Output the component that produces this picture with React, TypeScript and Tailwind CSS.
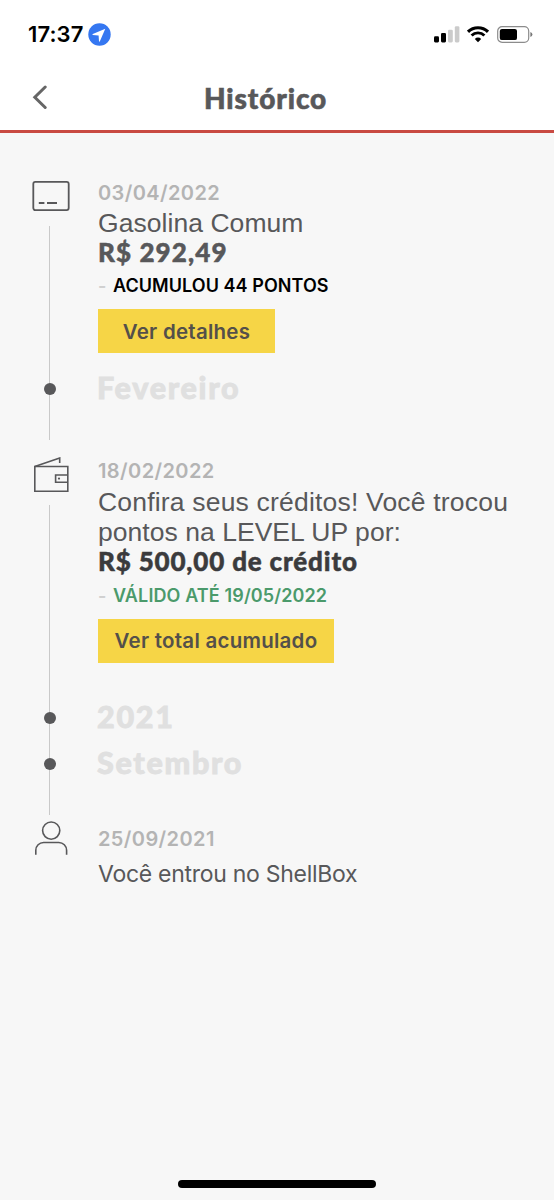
import React from 'react';

interface MonthLabelProps {
  children: React.ReactNode;
  className?: string;
}

const CardIcon = () => (
  <svg width="38" height="30" viewBox="0 0 38 30" fill="none" stroke="#58585a" strokeWidth="1.8">
    <rect x="1.3" y="0.9" width="35.4" height="28.2" rx="2" />
    <path d="M6.8 22h5.6M15 22h10" strokeWidth="2" />
  </svg>
);

const WalletIcon = () => (
  <svg width="36" height="36" viewBox="0 0 36 36" fill="none" stroke="#58585a" strokeWidth="1.6">
    <path d="M1.8 9.5h33v24.7h-33z" />
    <path d="M1.8 9.5L26.7 1v5" />
    <path d="M34.5 18H22.6v7.2h12" />
    <circle cx="26" cy="21.6" r="1.1" fill="#58585a" stroke="none" />
  </svg>
);

const PersonIcon = () => (
  <svg width="34" height="35" viewBox="0 0 34 35" fill="none" stroke="#58585a" strokeWidth="1.6">
    <circle cx="17.2" cy="9.6" r="8.6" />
    <path d="M1.8 33.8v-4.5a7.8 7.8 0 0 1 7.8-7.8h15.2a7.8 7.8 0 0 1 7.8 7.8v4.5" />
  </svg>
);

const StatusBar = () => (
  <div className="flex h-[68px] items-center pl-7 pr-[21px]">
    <span className="w-[60px] whitespace-nowrap font-['Inter'] text-[22px] font-semibold tracking-[0.1px] text-black">
      17:37
    </span>
    <svg width="23" height="23" viewBox="0 0 23 23">
      <circle cx="11.5" cy="11.5" r="11.2" fill="#3577f1" />
      <path d="M17.3 5.8L4.8 11.1q-1 .6.1.9l5.7.4.4 5.7q.3 1.2.9.1z" fill="#fff" />
    </svg>
    <div className="ml-auto flex items-center">
      <svg width="26" height="17" viewBox="0 0 26 17">
        <rect x="0" y="10.2" width="5" height="6.2" rx="1.3" fill="#000" />
        <rect x="7" y="7" width="5" height="9.4" rx="1.3" fill="#000" />
        <rect x="14" y="3.8" width="4.8" height="12.6" rx="1.3" fill="#cbcbcb" />
        <rect x="20.8" y="0.2" width="4.6" height="16.2" rx="1.3" fill="#cbcbcb" />
      </svg>
      <svg className="ml-[7px]" width="22" height="17" viewBox="0 0 22 17" fill="none" stroke="#000">
        <path d="M1 5.8a14.2 14.2 0 0 1 20 0" strokeWidth="3.1" />
        <path d="M4.6 9.5a9.1 9.1 0 0 1 12.8 0" strokeWidth="2.9" />
        <path d="M11 16.2l-3.2-3.3a4.6 4.6 0 0 1 6.4 0z" fill="#000" stroke="none" />
      </svg>
      <svg className="ml-[8px]" width="36" height="17" viewBox="0 0 36 17">
        <rect x="0.7" y="0.7" width="31" height="15.6" rx="4.4" fill="none" stroke="#8c8c8c" strokeWidth="1.2" />
        <rect x="2.8" y="2.9" width="17.2" height="11.2" rx="2.2" fill="#000" />
        <path d="M33.4 6v5q2-.8 2-2.5t-2-2.5z" fill="#777" />
      </svg>
    </div>
  </div>
);

const EntryDate = ({ children }: { children: React.ReactNode }) => (
  <p className="h-6 font-['Inter'] text-[20px] font-semibold leading-6 tracking-[0.4px] text-[#b4b4b4]">
    {children}
  </p>
);

const MonthLabel = ({ children, className = '' }: MonthLabelProps) => (
  <div
    className={`relative h-8 font-['Lato'] text-[30.5px] font-black leading-[29px] tracking-[1.7px] text-[#e0e0e0] [-webkit-text-stroke:0.8px_#e0e0e0] ${className}`}
  >
    <span className="absolute -left-[54px] top-[10px] size-[12px] rounded-full bg-[#58585a]" />
    <span className="-ml-px">{children}</span>
  </div>
);

export default function App() {
  return (
    <div className="flex h-[1200px] w-full max-w-[554px] flex-col overflow-hidden bg-[#f7f7f7] font-['Liberation_Sans',sans-serif] text-[#58585a]">
      <header className="h-[133px] border-b-[3px] border-[#c94a42] bg-white">
        <StatusBar />
        <div className="flex h-[58px] items-center">
          <button className="ml-8 w-4" aria-label="Voltar">
            <svg width="16" height="25" viewBox="0 0 16 25" fill="none" stroke="#666" strokeWidth="3" strokeLinecap="round">
              <path d="M13.2 2L2.8 12.2 13.2 22.5" />
            </svg>
          </button>
          <h1 className="ml-[156px] whitespace-nowrap pt-px font-['Lato'] text-[28px] font-black tracking-[0.9px] [-webkit-text-stroke:0.6px_#58585a]">
            Histórico
          </h1>
        </div>
      </header>

      <main className="flex flex-col pt-12">
        {/* Abastecimento */}
        <section className="flex h-[276px]">
          <div className="flex w-[98px] flex-col pl-8">
            <CardIcon />
            <div className="ml-[17px] mt-[15px] h-[214px] w-px bg-[#c9c9c9]" />
          </div>
          <div>
            <EntryDate>03/04/2022</EntryDate>
            <p className="mt-[3px] whitespace-nowrap text-[26.5px] leading-[30px] tracking-[0.05px]">Gasolina Comum</p>
            <p className="h-7 whitespace-nowrap font-['Lato'] text-[26px] font-black leading-[28px] tracking-[1.1px] [-webkit-text-stroke:0.5px_#58585a]">
              R$ 292,49
            </p>
            <p className="mt-2 flex h-6 whitespace-nowrap font-['Inter'] text-[18px] font-semibold leading-6 tracking-[0.06px] text-black">
              <span className="w-[15px] text-[#d0d0d0]">-</span>
              ACUMULOU 44 PONTOS
            </p>
            <button className="mt-[11px] block h-11 w-[177px] whitespace-nowrap bg-[#f6d546] pt-[2px] font-['Inter'] text-[20.5px] font-semibold tracking-[0.25px] text-[#54504a]">
              Ver detalhes
            </button>
            <MonthLabel className="mt-5">Fevereiro</MonthLabel>
          </div>
        </section>

        {/* Créditos */}
        <section className="flex h-[364px]">
          <div className="flex w-[98px] flex-col pl-[33px]">
            <WalletIcon />
            <div className="ml-4 mt-3 h-[310px] w-px bg-[#c9c9c9]" />
          </div>
          <div className="pt-[2px]">
            <EntryDate>18/02/2022</EntryDate>
            <p className="mt-1 whitespace-nowrap text-[26.5px] leading-[30px] tracking-[0.19px]">
              Confira seus créditos! Você trocou
              <br />
              <span className="tracking-[0.04px]">pontos na LEVEL UP por:</span>
            </p>
            <p className="h-7 whitespace-nowrap font-['Lato'] text-[26px] font-black leading-7 tracking-[0.83px] text-[#3b3b3d] [-webkit-text-stroke:0.5px_#3b3b3d]">
              R$ 500,00 de crédito
            </p>
            <p className="mt-2 flex h-6 whitespace-nowrap font-['Inter'] text-[18px] font-semibold leading-[25px] tracking-[0.12px] text-[#4b9a6b]">
              <span className="w-[15px] text-[#d0d0d0]">-</span>
              VÁLIDO ATÉ 19/05/2022
            </p>
            <button className="mt-3 block h-11 w-[236px] whitespace-nowrap bg-[#f6d546] pt-px font-['Inter'] text-[20.5px] font-semibold tracking-[0.25px] text-[#54504a]">
              Ver total acumulado
            </button>
            <MonthLabel className="mt-[39px]">2021</MonthLabel>
            <MonthLabel className="mt-[14px]">Setembro</MonthLabel>
          </div>
        </section>

        {/* Cadastro */}
        <section className="flex">
          <div className="w-[98px] pl-[34px]">
            <PersonIcon />
          </div>
          <div className="pt-[6px]">
            <EntryDate>25/09/2021</EntryDate>
            <p className="mt-[8px] whitespace-nowrap font-['Inter'] text-[23px] leading-[30px] tracking-[-0.28px]">
              Você entrou no ShellBox
            </p>
          </div>
        </section>
      </main>

      <div className="mx-auto mb-[12px] mt-auto h-2 w-[198px] rounded-full bg-black" />
    </div>
  );
}
